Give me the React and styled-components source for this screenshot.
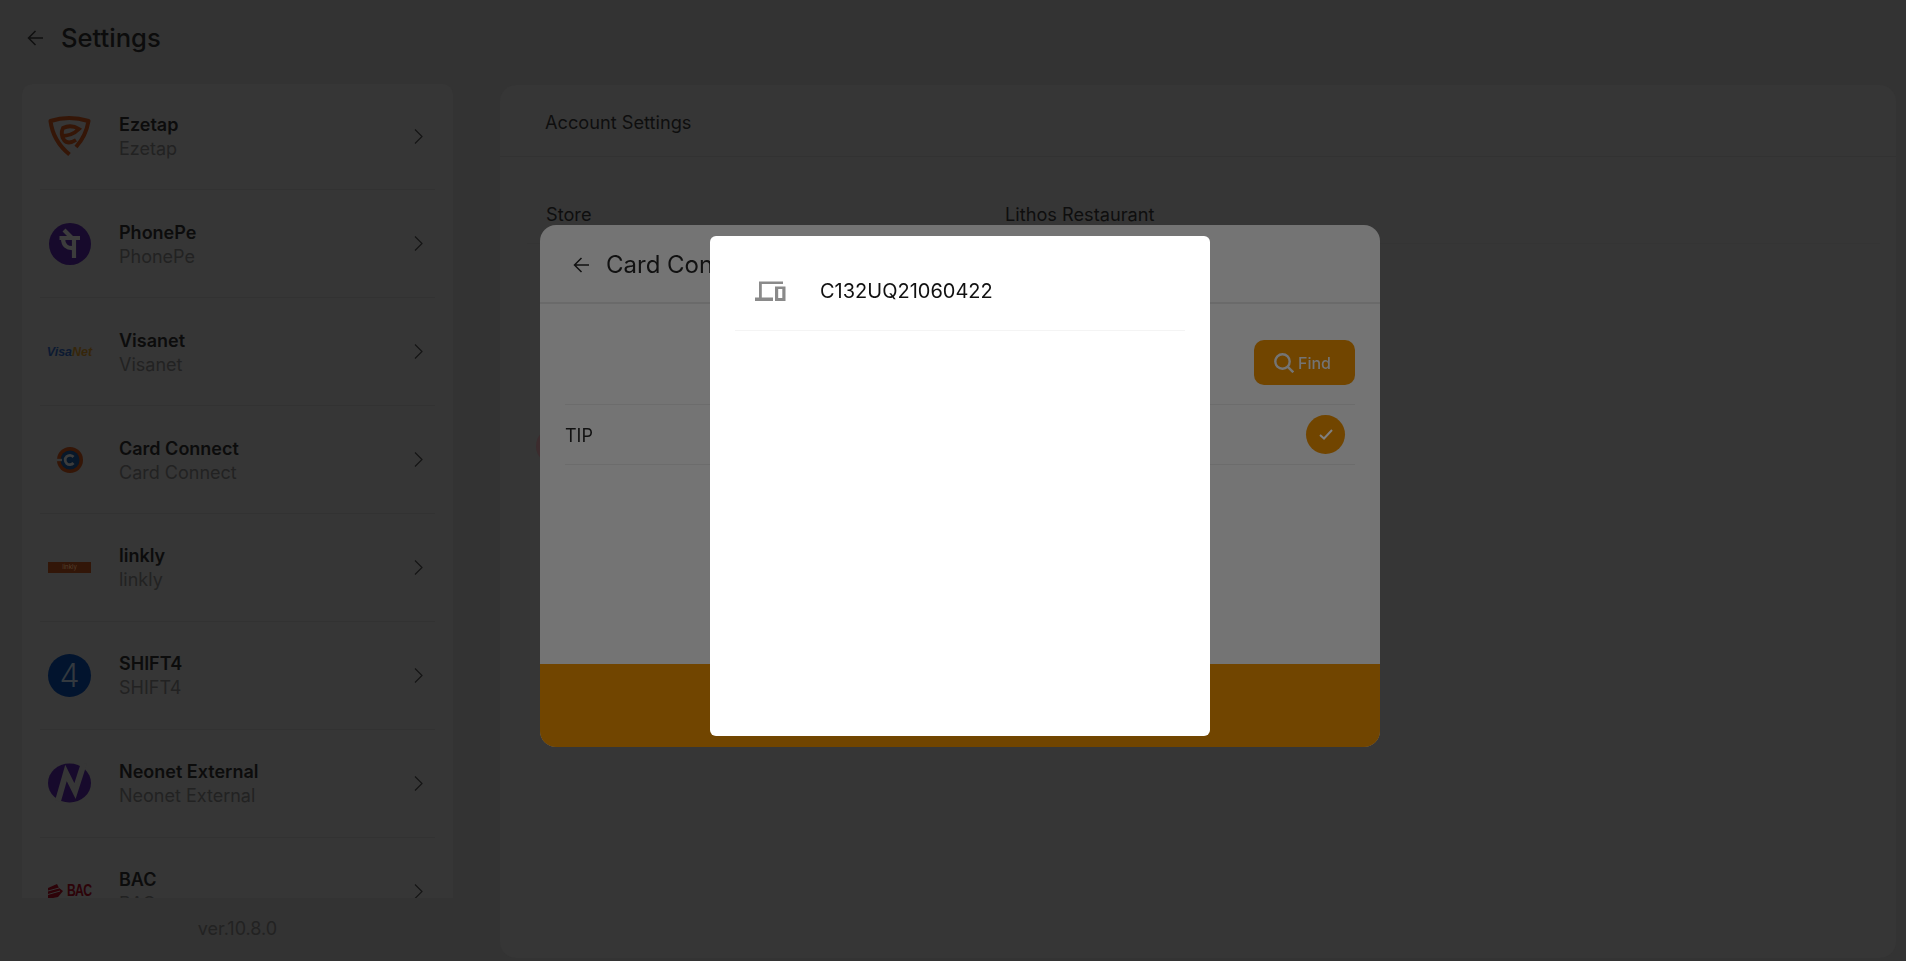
import React from 'react';
import styled, { createGlobalStyle } from 'styled-components';

const GlobalStyle = createGlobalStyle`
  html, body {
    margin: 0;
    padding: 0;
    background: #333333;
  }
  * {
    box-sizing: border-box;
  }
  body {
    font-family: Inter, "Noto Sans", sans-serif;
    overflow: hidden;
  }
`;

const EzetapLogo = () => (
  <svg width="43" height="42" viewBox="0 0 43 42">
    <path d="M21.500 39.500 Q5 26 2.500 6 Q21 0 40.500 6 Q38 21 28 32" fill="none" stroke="#351607" strokeWidth="4" strokeLinejoin="round" />
    <path d="M13 21 Q24 21 31 14 Q23 9 15 13 Q12 19 16 25 Q20 30 28 25" fill="none" stroke="#351607" strokeWidth="3.800" />
  </svg>
);

const PhonePeLogo = () => (
  <svg width="42" height="42" viewBox="0 0 42 42">
    <circle cx="21" cy="21" r="21" fill="#170a2c" />
    <path d="M10.500 15 H31 M25 15 V35 M14 15 Q14 26 25 25 M15 7 L23 15" fill="none" stroke="#3c3c3c" strokeWidth="4.200" />
  </svg>
);

const VisaNetLogo = () => (
  <VisaNetMark>
    <span>Visa</span>
    <VisaNetAccent>Net</VisaNetAccent>
  </VisaNetMark>
);

const CardConnectLogo = () => (
  <svg width="28" height="28" viewBox="0 0 28 28">
    <circle cx="14" cy="14" r="13" fill="#351607" />
    <circle cx="14" cy="14" r="9.500" fill="#08182a" />
    <rect x="0" y="12.800" width="6" height="2.400" fill="#363636" />
    <path d="M17.500 11 A4.700 4.700 0 1 0 17.500 17" fill="none" stroke="#3c3c3c" strokeWidth="2.800" />
  </svg>
);

const LinklyLogo = () => <LinklyMark>linkly</LinklyMark>;

const ShiftLogo = () => <ShiftMark>4</ShiftMark>;

const NeonetLogo = () => (
  <svg width="43" height="40" viewBox="0 0 43 40">
    <ellipse cx="21.500" cy="20" rx="21.500" ry="19.500" fill="#170a2c" />
    <path d="M10 38 L18 10 L27 28 L36 0" fill="none" stroke="#363636" strokeWidth="6" />
  </svg>
);

const BacLogo = () => (
  <BacMark>
    <svg width="15" height="15" viewBox="0 0 15 15">
      <path d="M0 4 L9 0 L11 4 L15 7 L10 13 L0 15 Z" fill="#2d0309" />
      <path d="M0 7 L11 4 M0 10.500 L12 7" stroke="#363636" strokeWidth="1" />
    </svg>
    <BacText>BAC</BacText>
  </BacMark>
);

const providers = [
  { name: 'Ezetap', Logo: EzetapLogo },
  { name: 'PhonePe', Logo: PhonePeLogo },
  { name: 'Visanet', Logo: VisaNetLogo },
  { name: 'Card Connect', Logo: CardConnectLogo },
  { name: 'linkly', Logo: LinklyLogo },
  { name: 'SHIFT4', Logo: ShiftLogo },
  { name: 'Neonet External', Logo: NeonetLogo },
  { name: 'BAC', Logo: BacLogo },
];

const BackArrow = ({ color }) => (
  <svg width="17" height="16" viewBox="0 0 17 16" fill="none" stroke={color} strokeWidth="1.500">
    <path d="M16 8 H1.500 M8.500 1 L1.500 8 L8.500 15" />
  </svg>
);

const Chevron = () => (
  <svg width="9" height="15" viewBox="0 0 9 15" fill="none" stroke="#141414" strokeWidth="1.100">
    <path d="M1 0.500 L8 7.500 L1 14.500" />
  </svg>
);

const DevicesIcon = () => (
  <svg width="31" height="20" viewBox="0 0 31 20" fill="#8a8a8a">
    <path d="M4 0.500 H28 V3 H6.800 V16.500 H18 V20 H0 V16.500 H4 Z" />
    <path fillRule="evenodd" d="M20 5.500 H30.500 V20 H20 Z M23.200 8 V17 H27.300 V8 Z" />
  </svg>
);

const SearchIcon = () => (
  <svg width="20" height="20" viewBox="0 0 20 20" fill="none" stroke="#747474" strokeWidth="2.400">
    <circle cx="8.500" cy="8.500" r="7.200" />
    <path d="M13.800 13.800 L19.300 19.300" />
  </svg>
);

const CheckIcon = () => (
  <svg width="14" height="11" viewBox="0 0 14 11" fill="none" stroke="#808080" strokeWidth="2">
    <path d="M1 6 L5 9.500 L13 1" />
  </svg>
);

const App = () => {
  return (
    <>
      <GlobalStyle />
      <Page>
        <TopBar>
          <BackArrow color="#101010" />
          <PageTitle>Settings</PageTitle>
        </TopBar>
        <Columns>
          <Sidebar>
            <ProviderPanel>
              <ProviderList>
                {providers.map(({ name, Logo }) => (
                  <ProviderRow key={name}>
                    <LogoSlot>
                      <Logo />
                    </LogoSlot>
                    <ProviderText>
                      <ProviderName>{name}</ProviderName>
                      <ProviderSub>{name}</ProviderSub>
                    </ProviderText>
                    <Chevron />
                  </ProviderRow>
                ))}
              </ProviderList>
            </ProviderPanel>
            <Version>ver.10.8.0</Version>
          </Sidebar>
          <AccountPanel>
            <AccountHeader>Account Settings</AccountHeader>
            <AccountBody>
              <AccountRow>
                <AccountLabel>Store</AccountLabel>
                <span>Lithos Restaurant</span>
              </AccountRow>
              <FaintBadge />
            </AccountBody>
          </AccountPanel>
        </Columns>
      </Page>

      <Layer>
        <Modal>
          <ModalHeader>
            <BackArrow color="#111111" />
            <ModalTitle>Card Connect</ModalTitle>
          </ModalHeader>
          <ModalBody>
            <FindRow>
              <FindButton>
                <SearchIcon />
                Find
              </FindButton>
            </FindRow>
            <OptionRow>
              <span>TIP</span>
              <CheckBadge>
                <CheckIcon />
              </CheckBadge>
            </OptionRow>
          </ModalBody>
          <ModalFooter />
        </Modal>
      </Layer>

      <Layer>
        <Dialog>
          <DeviceRow>
            <DevicesIcon />
            <DeviceName>C132UQ21060422</DeviceName>
          </DeviceRow>
        </Dialog>
      </Layer>
    </>
  );
};

export default App;

const Page = styled.div`
  height: 100vh;
  display: flex;
  flex-direction: column;
  background: #333333;
  color: #0e0e0e;
`;

const TopBar = styled.header`
  height: 84px;
  flex: none;
  display: flex;
  align-items: center;
  gap: 17px;
  padding: 0 0 9px 27px;
`;

const PageTitle = styled.h1`
  margin: 0;
  font-size: 25.600px;
  font-weight: 500;
  color: #0c0c0c;
`;

const Columns = styled.div`
  flex: 1;
  display: flex;
  gap: 47px;
  padding: 0 10px 3px 22px;
  min-height: 0;
`;

const Sidebar = styled.aside`
  width: 431px;
  flex: none;
  display: flex;
  flex-direction: column;
`;

const ProviderPanel = styled.div`
  height: 814px;
  flex: none;
  overflow: hidden;
  background: #363636;
  border-radius: 10px 10px 0 0;
`;

const ProviderList = styled.div`
  margin-top: -1.4px;
  padding: 0 18px;
`;

const ProviderRow = styled.div`
  height: 107.86px;
  display: flex;
  align-items: center;
  padding-right: 12px;
  border-bottom: 1px solid #323232;
`;

const LogoSlot = styled.div`
  width: 43px;
  margin: 0 28px 0 8px;
  flex: none;
  display: flex;
  justify-content: center;
  align-items: center;
`;

const ProviderText = styled.div`
  flex: 1;
  display: flex;
  flex-direction: column;
  padding-top: 2px;
`;

const ProviderName = styled.span`
  font-size: 18px;
  line-height: 24px;
  font-weight: 600;
  color: #0c0c0c;
`;

const ProviderSub = styled.span`
  font-size: 18px;
  line-height: 24px;
  color: #222222;
`;

const Version = styled.div`
  flex: 1;
  display: flex;
  align-items: center;
  justify-content: center;
  font-size: 18px;
  color: #222222;
`;

const VisaNetMark = styled.div`
  font-family: "Liberation Sans", sans-serif;
  font-size: 12.500px;
  font-weight: 700;
  font-style: italic;
  color: #0c1a32;
  white-space: nowrap;
`;

const VisaNetAccent = styled.span`
  color: #36260a;
`;

const LinklyMark = styled.div`
  width: 43px;
  height: 11px;
  background: #321608;
  color: #55402f;
  font-size: 6px;
  line-height: 10px;
  text-align: center;
`;

const ShiftMark = styled.div`
  width: 43px;
  height: 43px;
  border-radius: 50%;
  background: #02142e;
  color: #33393f;
  font-size: 32px;
  font-weight: 300;
  line-height: 43px;
  text-align: center;
`;

const BacMark = styled.div`
  display: flex;
  align-items: center;
  gap: 4px;
`;

const BacText = styled.span`
  font-family: "Liberation Sans", sans-serif;
  font-size: 17px;
  font-weight: 700;
  color: #2d0309;
  letter-spacing: -1px;
  margin-right: -10px;
  transform: scaleX(0.72);
  transform-origin: left center;
`;

const AccountPanel = styled.main`
  flex: 1;
  margin-top: 1px;
  background: #363636;
  border-radius: 16px;
  font-size: 18.200px;
`;

const AccountHeader = styled.div`
  height: 72px;
  display: flex;
  align-items: center;
  padding: 2px 0 0 45px;
  border-bottom: 1px solid #323232;
`;

const AccountBody = styled.div`
  padding-left: 36px;
`;

const AccountRow = styled.div`
  height: 87px;
  display: flex;
  align-items: flex-end;
  padding: 0 0 18px 19px;
  margin-left: -9px;
  margin-right: 16px;
  border-bottom: 1px solid #343434;
`;

const AccountLabel = styled.span`
  width: 459px;
`;

const FaintBadge = styled.div`
  width: 36px;
  height: 36px;
  margin-top: 184px;
  border-radius: 50%;
  background: #3c2c2e;
`;

const Layer = styled.div`
  position: fixed;
  inset: 0;
  display: flex;
  align-items: center;
  justify-content: center;
  padding: 11px 0 0 14px;
`;

const Modal = styled.section`
  width: 840px;
  height: 522px;
  display: flex;
  flex-direction: column;
  overflow: hidden;
  background: #747474;
  border-radius: 16px;
`;

const ModalHeader = styled.div`
  height: 79px;
  flex: none;
  display: flex;
  align-items: center;
  gap: 16px;
  padding: 2px 0 0 33px;
  border-bottom: 2px solid #6a6a6a;
`;

const ModalTitle = styled.h2`
  margin: 0;
  font-size: 24px;
  font-weight: 400;
  color: #111111;
`;

const ModalBody = styled.div`
  flex: 1;
  padding: 0 25px;
`;

const FindRow = styled.div`
  height: 101px;
  display: flex;
  align-items: flex-start;
  justify-content: flex-end;
  padding-top: 36px;
  border-bottom: 1px solid #6c6c6c;
`;

const FindButton = styled.button`
  width: 101px;
  height: 45px;
  display: flex;
  align-items: center;
  justify-content: center;
  gap: 4px;
  padding: 0 4px 0 0;
  border: 0;
  border-radius: 10px;
  background: #714500;
  color: #747474;
  font-family: inherit;
  font-size: 16px;
  font-weight: 500;
`;

const OptionRow = styled.div`
  height: 60px;
  display: flex;
  align-items: center;
  justify-content: space-between;
  padding: 0 10px 0 0;
  font-size: 18px;
  color: #111111;
  border-bottom: 1px solid #6c6c6c;

  > span {
    padding-top: 2px;
  }
`;

const CheckBadge = styled.div`
  width: 39px;
  height: 39px;
  display: flex;
  align-items: center;
  justify-content: center;
  border-radius: 50%;
  background: #714500;
`;

const ModalFooter = styled.div`
  height: 83px;
  flex: none;
  background: #714500;
`;

const Dialog = styled.div`
  width: 500px;
  height: 500px;
  padding: 0 25px;
  background: #ffffff;
  border-radius: 6px;
`;

const DeviceRow = styled.div`
  height: 95px;
  display: flex;
  align-items: center;
  gap: 34px;
  padding: 15px 0 0 20px;
  border-bottom: 1px solid #f4f4f4;
`;

const DeviceName = styled.span`
  font-size: 20px;
  color: #111111;
`;
